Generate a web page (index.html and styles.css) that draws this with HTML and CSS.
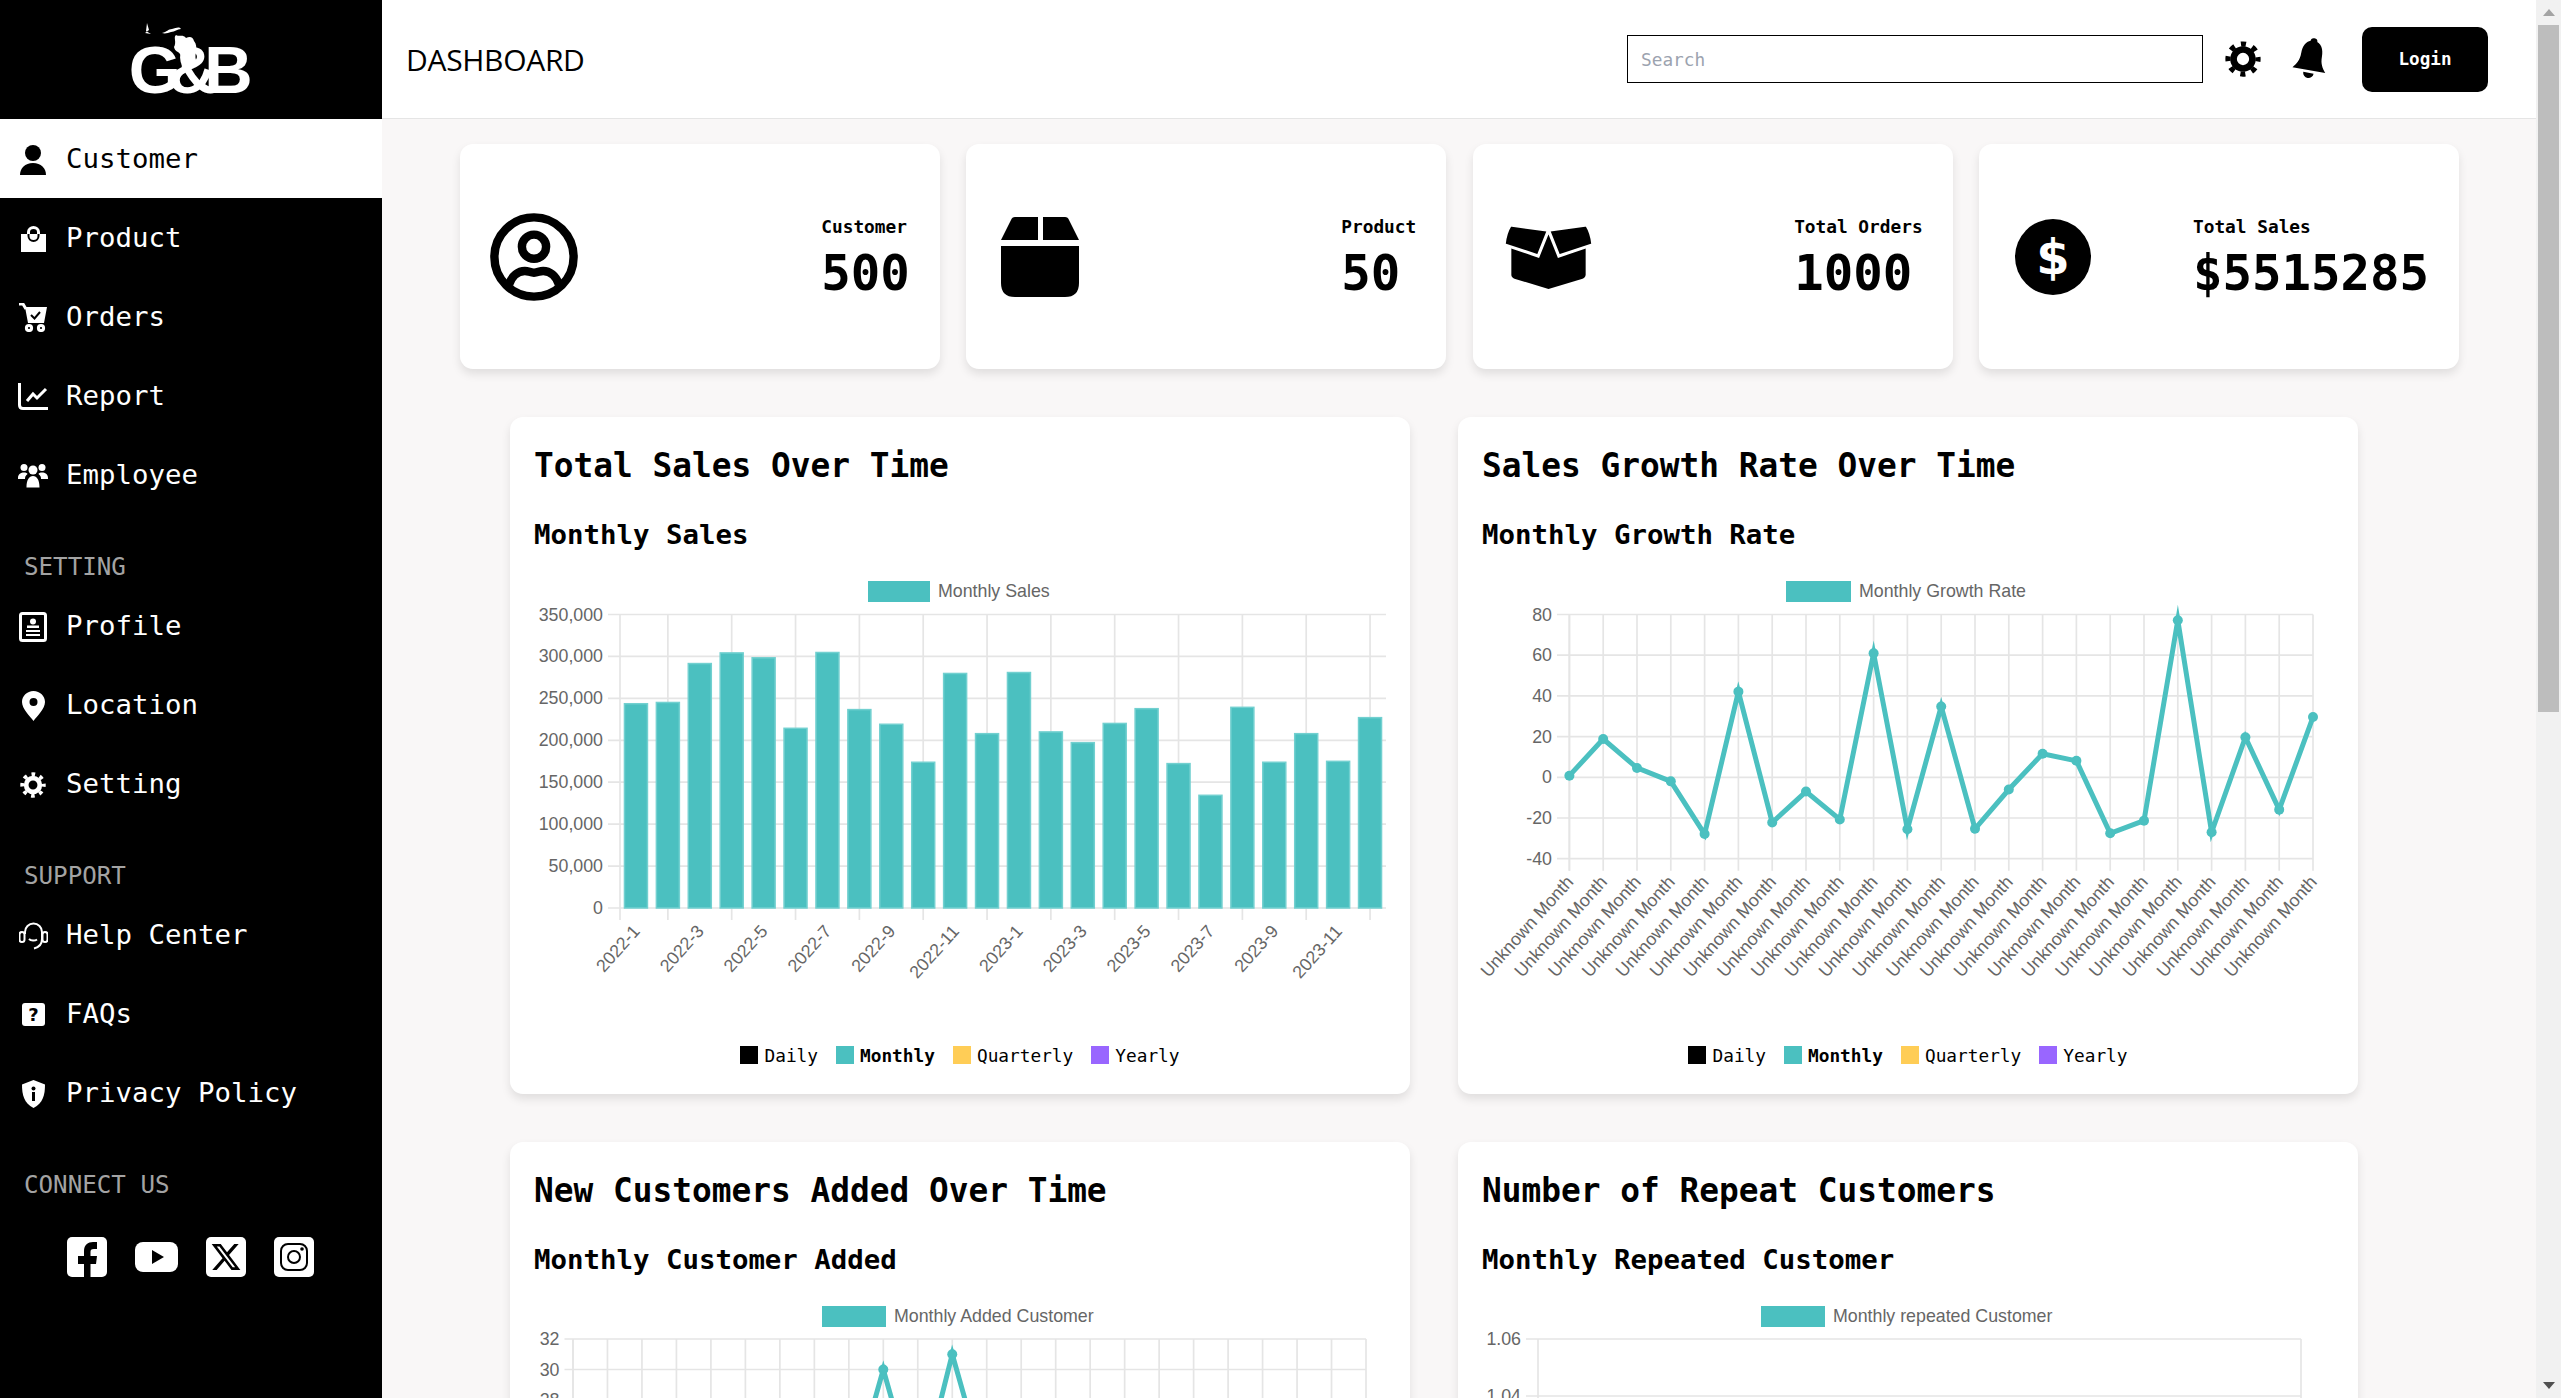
FILE: index.html
```html
<!DOCTYPE html>
<html lang="en">

<head>
    <meta charset="UTF-8">
    <meta name="viewport" content="width=device-width, initial-scale=1.0">
    <title>Dashboard</title>
    <link rel="stylesheet" href="styles.css">
</head>

<body>
    <div class="app">
        <aside class="sidebar">
            <div class="logo">
                <svg class="logo-dragon" width="120" height="50" viewBox="0 0 120 50">
                    <path d="M17 1 L19 8 L15 11 L21 12 L16 9 Z M32 11 C37 10 38 7 42 7 C46 6 49 4 51 7 C47 7 45 10 41 10 C38 11 35 12 32 11 Z" />
                    <path d="M44 25 C47 20 43 15 46 13 C50 15 53 12 56 16 C60 14 63 15 64 19 C69 25 64 32 66 38 C68 44 60 49 53 49 C50 44 54 37 50 32 C48 29 45 30 44 25 Z" />
                </svg>
                <span class="logo-text">G&amp;B</span>
            </div>

            <ul class="nav">
                <li class="nav-item active">
                    <span class="nav-icon"><svg width="26" height="30" viewBox="0 0 26 30"><circle cx="13" cy="8" r="8" /><path d="M0 30 C0 23 5 18 13 18 C21 18 26 23 26 30 Z" /></svg></span>
                    Customer
                </li>
                <li class="nav-item">
                    <span class="nav-icon"><svg width="25" height="26" viewBox="0 0 25 26"><path d="M0 8 H25 V26 H0 Z" /><path class="cut" d="M7.5 8 V10 A5 5 0 0 0 17.5 10 V8" /><path class="line" d="M7.5 8 V6 A5 4.5 0 0 1 17.5 6 V8" /></svg></span>
                    Product
                </li>
                <li class="nav-item">
                    <span class="nav-icon"><svg width="29" height="29" viewBox="0 0 29 29"><path class="line" d="M0 1 H4 L7 6" /><path d="M6 4 H28 L25 20 H9 Z" /><path class="cut" d="M12 12 L15.5 15.5 L21 9" /><circle class="line" cx="10" cy="25" r="2.6" /><circle class="line" cx="22" cy="25" r="2.6" /></svg></span>
                    Orders
                </li>
                <li class="nav-item">
                    <span class="nav-icon"><svg width="30" height="27" viewBox="0 0 30 27"><path class="line" d="M1.5 0 V22 Q1.5 25.5 5 25.5 H30" /><path class="line" d="M9 18 L15 11 L19 15 L28 6" /></svg></span>
                    Report
                </li>
                <li class="nav-item">
                    <span class="nav-icon"><svg width="30" height="25" viewBox="0 0 30 25"><circle cx="6" cy="4.5" r="3.5" /><circle cx="24" cy="4.5" r="3.5" /><circle cx="15" cy="7" r="4.5" /><path d="M0 15 C0 11 3 9.5 6 9.5 C8 9.5 9 10 9.5 11 C7.5 12.5 7 14 7 16 H0 Z M30 15 C30 11 27 9.5 24 9.5 C22 9.5 21 10 20.5 11 C22.5 12.5 23 14 23 16 H30 Z M8.5 24.5 C8.5 17 11 13 15 13 C19 13 21.5 17 21.5 24.5 Z" /></svg></span>
                    Employee
                </li>
            </ul>

            <h3 class="nav-title">SETTING</h3>
            <ul class="nav">
                <li class="nav-item">
                    <span class="nav-icon"><svg width="28" height="30" viewBox="0 0 28 30"><rect class="line" x="1.5" y="1.5" width="25" height="27" rx="2" /><circle cx="14" cy="9.5" r="3" /><path d="M8 13.5 H20 V16 H8 Z M7 18 H21 V20 H7 Z M7 22 H21 V24 H7 Z" /></svg></span>
                    Profile
                </li>
                <li class="nav-item">
                    <span class="nav-icon"><svg width="23" height="30" viewBox="0 0 23 30"><path fill-rule="evenodd" d="M11.5 0 C18 0 23 5 23 11 C23 18 15 25 11.5 30 C8 25 0 18 0 11 C0 5 5 0 11.5 0 Z M11.5 7 A4 4 0 1 0 11.5 15 A4 4 0 1 0 11.5 7 Z" /></svg></span>
                    Location
                </li>
                <li class="nav-item">
                    <span class="nav-icon"><svg width="26" height="26" viewBox="0 0 24 24"><circle class="gear-ring" cx="12" cy="12" r="6.3" /><circle class="gear-teeth" cx="12" cy="12" r="10" /></svg></span>
                    Setting
                </li>
            </ul>

            <h3 class="nav-title">SUPPORT</h3>
            <ul class="nav">
                <li class="nav-item">
                    <span class="nav-icon"><svg width="29" height="28" viewBox="0 0 29 28"><path class="thin" d="M6 12 V10 A8.5 8.5 0 0 1 23 10 V17 C23 23 19 25.5 15 26.5" /><rect x="0.5" y="10" width="5" height="10" rx="2.5" class="thin" /><rect x="23.5" y="10" width="5" height="10" rx="2.5" class="thin" /><path class="thin" d="M10 17 C12 19 16 19 18 17.5" /></svg></span>
                    Help Center
                </li>
                <li class="nav-item">
                    <span class="nav-icon"><svg width="23" height="23" viewBox="0 0 23 23"><rect width="23" height="23" rx="3" /><text class="faq-mark" x="11.5" y="18">?</text></svg></span>
                    FAQs
                </li>
                <li class="nav-item">
                    <span class="nav-icon"><svg width="23" height="28" viewBox="0 0 23 28"><path d="M11.5 0 L23 4.5 C23 15 21 23 11.5 28 C2 23 0 15 0 4.5 Z" /><circle class="cut-fill" cx="11.5" cy="8.5" r="2" /><path class="cut-fill" d="M10 12 H13 V21 H10 Z" /></svg></span>
                    Privacy Policy
                </li>
            </ul>

            <h3 class="nav-title">CONNECT US</h3>
            <div class="social">
                <svg width="40" height="40" viewBox="0 0 40 40"><rect width="40" height="40" rx="5" /><path class="cut-fill" d="M17 40 V27 H11 V19 H17 V14 C17 8 21 5 26 5 H30 V12 H27 C24 12 23.5 13 23.5 15 V19 H30 L29 27 H23.5 V40 Z" /></svg>
                <svg width="43" height="30" viewBox="0 0 43 30"><rect width="43" height="30" rx="8" /><path class="cut-fill" d="M17 8 L29 15 L17 22 Z" /></svg>
                <svg width="40" height="40" viewBox="0 0 40 40"><rect width="40" height="40" rx="5" /><path class="cut-fill" transform="translate(4 4) scale(1.33)" d="M18.244 2.25h3.308l-7.227 8.26 8.502 11.24H16.17l-5.214-6.817L4.99 21.75H1.68l7.73-8.835L1.254 2.25H8.08l4.713 6.231zm-1.161 17.52h1.833L7.084 4.126H5.117z" /></svg>
                <svg width="40" height="40" viewBox="0 0 40 40"><rect width="40" height="40" rx="5" /><rect class="cut" x="7" y="7" width="26" height="26" rx="7" /><circle class="cut" cx="20" cy="20" r="6" /><circle class="cut-fill" cx="28" cy="12" r="1.8" /></svg>
            </div>
        </aside>

        <div class="main">
            <header class="header">
                <h1 class="page-title">DASHBOARD</h1>
                <div class="header-actions">
                    <input class="search" type="text" placeholder="Search">
                    <svg class="gear-btn" width="36" height="36" viewBox="0 0 24 24"><circle class="gear-ring" cx="12" cy="12" r="6.3" /><circle class="gear-teeth" cx="12" cy="12" r="10" /></svg>
                    <svg class="bell-btn" width="42" height="44" viewBox="0 0 24 25"><g transform="rotate(10 12 12)"><circle cx="12" cy="2.5" r="2" /><path d="M12 2 C7.5 2 6 6 6 10 C6 14.5 4.5 16.5 2.5 19 H21.5 C19.500 16.500 18 14.5 18 10 C18 6 16.500 2 12 2 Z" /><path d="M9 20.500 H15 A3 3 0 0 1 9 20.500 Z" /></g></svg>
                    <button class="login-btn">Login</button>
                </div>
            </header>

            <div class="content">
                <section class="stats">
                    <div class="stat-card">
                        <svg class="stat-icon" width="88" height="88" viewBox="0 0 24 24"><circle class="stat-line" cx="12" cy="12" r="10.8" /><circle class="stat-line" cx="12" cy="9.2" r="3.3" /><path class="stat-line" d="M5.200 19.500 C6 17 7.800 15.800 9.500 15.800 C10.500 15.800 11 16.300 12 16.300 C13 16.300 13.500 15.800 14.500 15.800 C16.200 15.800 18 17 18.800 19.500" /></svg>
                        <div class="stat-text">
                            <p class="stat-label">Customer</p>
                            <p class="stat-value">500</p>
                        </div>
                    </div>
                    <div class="stat-card">
                        <svg class="stat-icon" width="88" height="80" viewBox="-5 0 88 80"><path d="M10 3 Q11 0 14 0 H37 V23 H0 Z M42 0 H64 Q67 0 68 3 L78 23 H42 Z M0 29 H78 V66 Q78 80 64 80 H14 Q0 80 0 66 Z" /></svg>
                        <div class="stat-text">
                            <p class="stat-label">Product</p>
                            <p class="stat-value">50</p>
                        </div>
                    </div>
                    <div class="stat-card">
                        <svg class="stat-icon" width="91" height="64" viewBox="-1 0 88 62"><path d="M7 20 L43 8 L79 20 V48 Q79 51 76 52 L43 62 L10 52 Q7 51 7 48 Z" /><path class="flap" d="M6 0 L43 5 L33 30 L0 19 Q1 8 6 0 Z M80 0 L43 5 L53 30 L86 19 Q85 8 80 0 Z" /></svg>
                        <div class="stat-text">
                            <p class="stat-label">Total Orders</p>
                            <p class="stat-value">1000</p>
                        </div>
                    </div>
                    <div class="stat-card">
                        <svg class="stat-icon" width="88" height="76" viewBox="0 0 88 76"><circle cx="44" cy="38" r="38" /><text class="dollar-mark" x="44" y="55">$</text></svg>
                        <div class="stat-text">
                            <p class="stat-label">Total Sales</p>
                            <p class="stat-value">$5515285</p>
                        </div>
                    </div>
                </section>

                <section class="charts">
                    <div class="chart-card">
                        <h2 class="chart-title">Total Sales Over Time</h2>
                        <h3 class="chart-sub">Monthly Sales</h3>
                        <svg class="chart" id="sales-chart" width="852" height="460"></svg>
                        <div class="period">
                            <span class="period-item"><i class="swatch daily"></i>Daily</span>
                            <span class="period-item selected"><i class="swatch monthly"></i>Monthly</span>
                            <span class="period-item"><i class="swatch quarterly"></i>Quarterly</span>
                            <span class="period-item"><i class="swatch yearly"></i>Yearly</span>
                        </div>
                    </div>
                    <div class="chart-card">
                        <h2 class="chart-title">Sales Growth Rate Over Time</h2>
                        <h3 class="chart-sub">Monthly Growth Rate</h3>
                        <svg class="chart" id="growth-chart" width="852" height="460"></svg>
                        <div class="period">
                            <span class="period-item"><i class="swatch daily"></i>Daily</span>
                            <span class="period-item selected"><i class="swatch monthly"></i>Monthly</span>
                            <span class="period-item"><i class="swatch quarterly"></i>Quarterly</span>
                            <span class="period-item"><i class="swatch yearly"></i>Yearly</span>
                        </div>
                    </div>
                    <div class="chart-card">
                        <h2 class="chart-title">New Customers Added Over Time</h2>
                        <h3 class="chart-sub">Monthly Customer Added</h3>
                        <svg class="chart" id="added-chart" width="852" height="460"></svg>
                    </div>
                    <div class="chart-card">
                        <h2 class="chart-title">Number of Repeat Customers</h2>
                        <h3 class="chart-sub">Monthly Repeated Customer</h3>
                        <svg class="chart" id="repeat-chart" width="852" height="460"></svg>
                    </div>
                </section>
            </div>
        </div>

        <div class="scrollbar">
            <span class="scroll-up"></span>
            <span class="scroll-thumb"></span>
            <span class="scroll-down"></span>
        </div>
    </div>

    <script src="script.js"></script>
</body>

</html>
```

FILE: styles.css
```css
* {
    margin: 0;
    padding: 0;
    box-sizing: border-box;
}

html,
body {
    height: 100%;
    overflow: hidden;
    font-family: 'DejaVu Sans Mono', 'Liberation Mono', monospace;
    color: #000;
}

.app {
    display: flex;
    height: 100vh;
    overflow: hidden;
}

/* sidebar */
.sidebar {
    flex: 0 0 382px;
    background: #000;
    color: #fff;
}

.logo {
    position: relative;
    height: 119px;
    display: flex;
    justify-content: center;
}

.logo-text {
    font-family: 'Liberation Sans', sans-serif;
    font-weight: bold;
    font-size: 67px;
    line-height: 66px;
    letter-spacing: -12.500px;
    padding-top: 37px;
    padding-right: 13px;
}

.logo-dragon {
    position: absolute;
    left: 130px;
    top: 22px;
    fill: #fff;
}

.nav {
    list-style: none;
}

.nav-item {
    display: flex;
    align-items: center;
    height: 79px;
    padding-left: 18px;
    font-size: 27.4px;
    line-height: 34px;
}

.nav-icon {
    flex: 0 0 30px;
    margin-right: 18px;
    display: flex;
    justify-content: center;
    margin-bottom: -2px;
}

.nav-item.active {
    background: #fff;
    color: #000;
}

.nav-icon svg {
    fill: currentColor;
}

.nav-title {
    height: 72px;
    padding: 33px 0 0 24px;
    font-size: 24.2px;
    font-weight: normal;
    line-height: 40px;
    color: #a3a3a3;
}

.line,
.thin {
    fill: none !important;
    stroke: currentColor;
    stroke-width: 3;
}

.thin {
    stroke-width: 2;
}

.cut {
    fill: none !important;
    stroke: #000;
    stroke-width: 2;
}

.nav-item.active .cut {
    stroke: #fff;
}

.cut-fill {
    fill: #000 !important;
}

.faq-mark {
    font-family: 'DejaVu Sans', sans-serif;
    font-weight: bold;
    font-size: 18px;
    text-anchor: middle;
    fill: #000;
}

.social {
    display: flex;
    align-items: center;
    gap: 28px;
    padding: 33px 0 0 67px;
    fill: #fff;
}

.gear-ring {
    fill: none;
    stroke: currentColor;
    stroke-width: 4.400;
}

.gear-teeth {
    fill: none;
    stroke: currentColor;
    stroke-width: 3.500;
    stroke-dasharray: 3.4 4.454;
    stroke-dashoffset: 1.700;
}

/* header */
.main {
    flex: 1;
    min-width: 0;
    background: #f9f7f7;
    overflow: hidden;
}

.header {
    display: flex;
    align-items: center;
    justify-content: space-between;
    height: 119px;
    padding: 0 48px 0 24px;
    background: #fff;
    border-bottom: 1px solid #e5e5e5;
}

.page-title {
    font-family: 'Open Sans', sans-serif;
    font-size: 30px;
    font-weight: normal;
    letter-spacing: -0.3px;
}

.header-actions {
    display: flex;
    align-items: center;
}

.search {
    width: 576px;
    height: 48px;
    padding: 0 13px;
    border: 1px solid #000;
    font-family: inherit;
    font-size: 17.8px;
    outline: none;
}

.search::placeholder {
    color: #9ca3af;
}

.gear-btn {
    margin-left: 22px;
}

.bell-btn {
    margin-left: 29px;
}

.login-btn {
    width: 126px;
    height: 65px;
    margin-left: 30px;
    background: #000;
    color: #fff;
    border: none;
    border-radius: 10px;
    font-family: inherit;
    font-size: 17.6px;
    font-weight: bold;
}

/* stat cards */
.content {
    padding-top: 25px;
}

.stats {
    display: grid;
    grid-template-columns: repeat(4, 1fr);
    gap: 26.6px;
    padding: 0 77px 0 78px;
}

.stat-card {
    display: flex;
    align-items: center;
    justify-content: space-between;
    height: 225px;
    padding: 0 30px;
    background: #fff;
    border-radius: 13px;
    box-shadow: 0 5px 10px rgba(0, 0, 0, 0.1);
}

.stat-text {
    padding-top: 3px;
}

.stat-label {
    font-size: 17.8px;
    font-weight: bold;
    line-height: 24px;
}

.stat-value {
    margin-top: 7px;
    font-size: 49px;
    font-weight: bold;
    line-height: 56px;
}

.stat-line {
    fill: none;
    stroke: #000;
    stroke-width: 2.300;
}

.flap {
    stroke: #fff;
    stroke-width: 3;
}

.dollar-mark {
    font-family: 'DejaVu Sans', sans-serif;
    font-weight: bold;
    font-size: 48px;
    text-anchor: middle;
    fill: #fff;
}

/* chart cards */
.charts {
    display: grid;
    grid-template-columns: 900px 900px;
    gap: 48px;
    padding: 48px 0 0 128px;
}

.chart-card {
    padding: 24px 24px 23px;
    background: #fff;
    border-radius: 13px;
    box-shadow: 0 5px 10px rgba(0, 0, 0, 0.1);
}

.chart-title {
    font-size: 32.8px;
    line-height: 50px;
}

.chart-sub {
    margin-top: 24px;
    font-size: 27.4px;
    line-height: 40px;
}

.chart {
    display: block;
    margin-top: 15px;
    overflow: visible;
    font-family: 'Liberation Sans', sans-serif;
    font-size: 17.8px;
}

.chart text {
    fill: #666;
}

.grid-line {
    stroke: #e5e5e5;
    stroke-width: 1.700;
}

.bar {
    fill: #4bc0c0;
    stroke: #72d0d0;
    stroke-width: 1.500;
}

.legend-box {
    fill: #4bc0c0;
}

.trend {
    fill: none;
    stroke: #4bc0c0;
    stroke-width: 5;
    stroke-miterlimit: 10;
}

.dot {
    fill: #4bc0c0;
}

.period {
    display: flex;
    justify-content: center;
    gap: 18px;
    height: 32px;
    margin-top: 9px;
    font-size: 17.8px;
}

.period-item {
    display: flex;
    align-items: center;
    gap: 6px;
}

.period-item.selected {
    font-weight: bold;
}

.swatch {
    width: 18px;
    height: 18px;
}

.daily { background: #000; }
.monthly { background: #4bc0c0; }
.quarterly { background: #ffcd56; }
.yearly { background: #9966ff; }

/* the page scrollbar */
.scrollbar {
    flex: 0 0 25px;
    display: flex;
    flex-direction: column;
    align-items: center;
    background: #f1f1f1;
}

.scroll-up {
    width: 0;
    height: 0;
    margin: 9px 0 6px;
    border-left: 6px solid transparent;
    border-right: 6px solid transparent;
    border-bottom: 7px solid #a3a3a3;
}

.scroll-thumb {
    width: 21px;
    height: 687px;
    margin-top: 3px;
    background: #bdbdbd;
}

.scroll-down {
    width: 0;
    height: 0;
    margin-top: auto;
    margin-bottom: 9px;
    border-left: 6px solid transparent;
    border-right: 6px solid transparent;
    border-top: 7px solid #505050;
}
```

FILE: script.js
```js
const monthLabels = ['2022-1', '2022-2', '2022-3', '2022-4', '2022-5', '2022-6', '2022-7', '2022-8', '2022-9', '2022-10', '2022-11', '2022-12',
    '2023-1', '2023-2', '2023-3', '2023-4', '2023-5', '2023-6', '2023-7', '2023-8', '2023-9', '2023-10', '2023-11', '2023-12'];

const salesData = [243600, 245100, 291500, 304200, 298400, 214300, 304700, 236600, 219100, 173800, 279700, 207900,
    280800, 210000, 197200, 220100, 237700, 172200, 134400, 239300, 173800, 207900, 174900, 227000];

const growthData = [0.8, 18.8, 4.6, -2, -27.9, 42.1, -22.2, -7, -20.7, 60.9, -25.5, 34.8,
    -25.3, -6, 11.6, 8.1, -27.5, -21.3, 77.2, -27, 19.7, -15.9, 29.6];

const addedData = [21, 24, 19, 23, 26, 18, 22, 25, 22, 30, 22, 31, 23, 20, 26, 24, 19, 23, 27, 21, 25, 22, 24, 20];

function line(x1, y1, x2, y2) {
    return `<line class="grid-line" x1="${x1}" y1="${y1}" x2="${x2}" y2="${y2}"></line>`;
}

function frame(c) {
    let html = '';
    const legendWidth = c.legendBox;
    html += `<rect class="legend-box" x="${c.legendX}" y="11" width="${legendWidth}" height="21"></rect>`;
    html += `<text x="${c.legendX + legendWidth + 8}" y="27">${c.legend}</text>`;

    c.ticks.forEach((tick, i) => {
        const y = c.top + i * c.step;
        html += line(c.gridLeft, y, c.right, y);
        html += `<text x="${c.gridLeft - 5}" y="${y + 6}" text-anchor="end">${tick}</text>`;
    });
    // the two lower charts run past the fold, only their top ticks are listed
    const rows = c.rows || c.ticks.length - 1;
    const bottom = c.top + rows * c.step;
    html += line(c.left, c.top, c.left, bottom + 12);
    return { html, bottom };
}

function drawSales() {
    const c = {
        legend: 'Monthly Sales', legendX: 334, legendBox: 62,
        ticks: ['350,000', '300,000', '250,000', '200,000', '150,000', '100,000', '50,000', '0'],
        top: 44.5, step: 41.93, left: 86, right: 852, gridLeft: 74
    };
    const { html: base, bottom } = frame(c);
    let html = base;
    const cat = (c.right - c.left) / 24;

    // ticks sit on the even months, labels on the odd ones
    for (let i = 1; i < 24; i += 2) {
        const x = c.left + cat * (i + 0.5);
        html += line(x, c.top, x, bottom + 12);
    }
    salesData.forEach((value, i) => {
        const h = value / 50000 * c.step;
        const x = c.left + cat * (i + 0.5) - 11.500;
        html += `<rect class="bar" x="${x}" y="${bottom - h}" width="23" height="${h}"></rect>`;
    });
    for (let i = 0; i < 24; i += 2) {
        const x = c.left + cat * (i + 0.5) + 5;
        const y = bottom + 24;
        html += `<text x="${x}" y="${y}" text-anchor="end" transform="rotate(-48 ${x} ${y})">${monthLabels[i]}</text>`;
    }
    document.getElementById('sales-chart').innerHTML = html;
}

function drawTrend(id, c, data, min, perTick, xLabels) {
    const { html: base, bottom } = frame(c);
    let html = base;
    const gap = (c.right - c.left) / (data.length - 1);
    const points = data.map((value, i) => [c.left + i * gap, bottom - (value - min) / perTick * c.step]);

    if (c.verticals) {
        points.forEach(p => {
            html += line(p[0], c.top, p[0], bottom + 12);
        });
    } else {
        html += line(c.right, c.top, c.right, bottom);
    }
    html += `<polyline class="trend" points="${points.map(p => p.join(',')).join(' ')}"></polyline>`;
    points.forEach(p => {
        html += `<circle class="dot" cx="${p[0]}" cy="${p[1]}" r="5"></circle>`;
    });
    if (xLabels) {
        points.forEach(p => {
            const x = p[0] + 5;
            const y = bottom + 24;
            html += `<text x="${x}" y="${y}" text-anchor="end" transform="rotate(-48 ${x} ${y})">${xLabels}</text>`;
        });
    }
    document.getElementById(id).innerHTML = html;
}

drawSales();

drawTrend('growth-chart', {
    legend: 'Monthly Growth Rate', legendX: 304, legendBox: 65,
    ticks: ['80', '60', '40', '20', '0', '-20', '-40'],
    top: 44.5, step: 40.7, left: 87.4, right: 831, gridLeft: 75, verticals: true
}, growthData, -40, 20, 'Unknown Month');

drawTrend('added-chart', {
    legend: 'Monthly Added Customer', legendX: 288, legendBox: 64,
    ticks: ['32', '30', '28'], rows: 9,
    top: 44, step: 30.5, left: 39, right: 832, gridLeft: 30.500, verticals: true
}, addedData, 14, 2);

drawTrend('repeat-chart', {
    legend: 'Monthly repeated Customer', legendX: 279, legendBox: 64,
    ticks: ['1.06', '1.04'], rows: 6,
    top: 44, step: 57, left: 56, right: 819, gridLeft: 44
}, new Array(24).fill(1), 0.94, 0.02);
```
